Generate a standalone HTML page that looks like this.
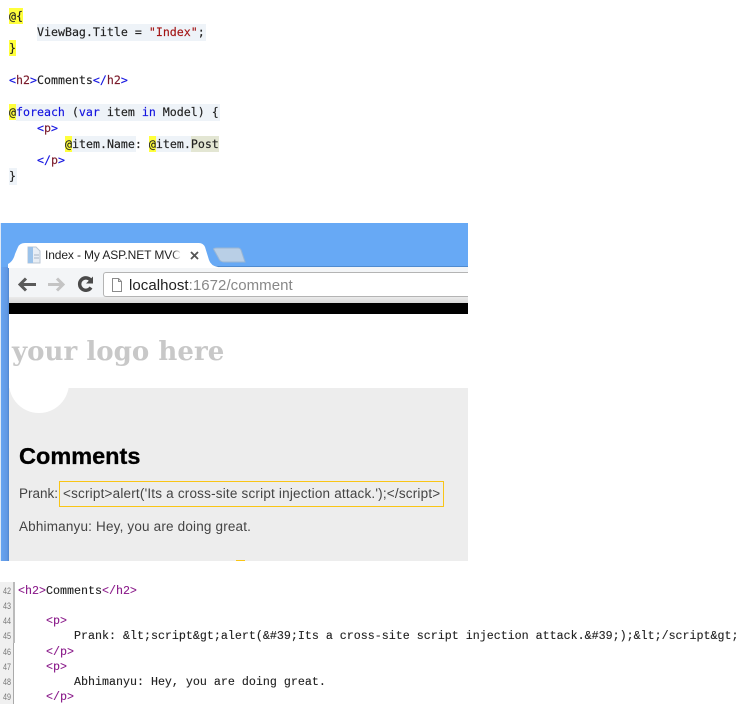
<!DOCTYPE html>
<html><head><meta charset="utf-8">
<style>
html,body{margin:0;padding:0;background:#fff;width:743px;height:709px;overflow:hidden}
.a{position:absolute;white-space:pre}
.c,.b{font-family:"Liberation Mono",monospace;font-size:11.67px;line-height:16px;color:#1a1a1a}
.c{font-family:"DejaVu Sans Mono",monospace;font-size:11.62px;height:16px;color:#222;-webkit-text-stroke:.15px}
.bg{position:absolute}
.bl{color:#1414e0}.br{color:#7a1a2a}.re{color:#a31515}.g{color:#333}
.y{background:#ffff3c;display:inline-block;height:16px}
.b{color:#222;line-height:15px;font-weight:normal;-webkit-text-stroke:.12px}
.m{color:#8a1a8a}
.n{font-family:"Liberation Sans",sans-serif;font-size:9px;color:#777;transform:scaleX(.8);transform-origin:0 0;line-height:12px}
.s{font-family:"Liberation Sans",sans-serif}
</style></head><body>
<!-- code background -->
<div class="bg" style="left:37px;top:24px;width:169px;height:17px;background:#eef3f8"></div>
<div class="bg" style="left:16px;top:104px;width:204px;height:17px;background:#eef3f8"></div>
<div class="bg" style="left:72px;top:136px;width:64px;height:16px;background:#eef3f8"></div>
<div class="bg" style="left:156px;top:136px;width:35px;height:16px;background:#eef3f8"></div>
<div class="bg" style="left:191px;top:136px;width:28px;height:16px;background:#e3e6d3"></div>
<div class="bg" style="left:9px;top:168px;width:8px;height:17px;background:#eef3f8"></div>
<div class="a c" style="left:9px;top:8px"><span class="y">@{</span></div>
<div class="a c" style="left:37px;top:24px">ViewBag.Title = <span class="re">"Index"</span>;</div>
<div class="a c" style="left:9px;top:40px"><span class="y">}</span></div>
<div class="a c" style="left:9px;top:72px"><span class="bl">&lt;</span><span class="br">h2</span><span class="bl">&gt;</span>Comments<span class="bl">&lt;/</span><span class="br">h2</span><span class="bl">&gt;</span></div>
<div class="a c" style="left:9px;top:104px"><span class="y">@</span><span class="bl">foreach</span> (<span class="bl">var</span> item <span class="bl">in</span> Model) {</div>
<div class="a c" style="left:37px;top:120px"><span class="bl">&lt;</span><span class="br">p</span><span class="bl">&gt;</span></div>
<div class="a c" style="left:65px;top:136px"><span class="y">@</span>item.Name: <span class="y">@</span>item.Post</div>
<div class="a c" style="left:37px;top:152px"><span class="bl">&lt;/</span><span class="br">p</span><span class="bl">&gt;</span></div>
<div class="a c" style="left:9px;top:168px">}</div>

<!-- browser -->
<div class="bg" style="left:0;top:223px;width:468px;height:338px;background:#ededed"></div>
<div class="bg" style="left:1px;top:223px;width:467px;height:44px;background:#67a9f5"></div>
<div class="bg" style="left:0;top:223px;width:1px;height:338px;background:#dfe9f6"></div>
<div class="bg" style="left:1px;top:267px;width:8px;height:294px;background:linear-gradient(90deg,#67a4f0 0,#6198e4 6px,#4f86cf 8px)"></div>
<div class="bg" style="left:9px;top:266px;width:459px;height:1px;background:#4f8bd0"></div>
<div class="bg" style="left:9px;top:267px;width:459px;height:36px;background:#f3f5f7"></div>
<svg class="bg" style="left:0;top:223px" width="260" height="46">
<path d="M8 45 L8 41 C12 39 14 35 15 31 L18 24 Q20 20 25 20 L199 20 Q203 20 205 24 L209 37 Q211 43 218 44 L218 45 Z" fill="#fff"/>
<path d="M213.500 26 Q214 25 217 25 L238 25 Q240 25 241 27 L245 39 L224 39 Q220 39 218.500 35 Z" fill="#b9cfe6" stroke="#9ab6d4" stroke-width="1"/>
</svg>
<!-- favicon -->
<svg class="bg" style="left:25px;top:246px" width="17" height="18">
<path d="M3 1 H11 L15 5 V17 H3 Z" fill="#e8eef5" stroke="#b9c6d4"/>
<rect x="3" y="1" width="5" height="16" fill="#9cc3ea"/>
<path d="M9 9H14M9 12H14" stroke="#a9b7c6"/>
</svg>
<div class="a s" style="left:45px;top:247px;font-size:12px;line-height:16px;color:#222;letter-spacing:-.12px">Index - My ASP.NET MVC</div>
<div class="bg" style="left:172px;top:246px;width:9px;height:18px;background:linear-gradient(90deg,rgba(255,255,255,0),#fff)"></div>
<svg class="bg" style="left:190px;top:251px" width="9" height="9"><path d="M1 1 L8 8 M8 1 L1 8" stroke="#555" stroke-width="1.800"/></svg>
<!-- nav icons -->
<svg class="bg" style="left:15px;top:275px" width="85" height="20">
<path d="M5 9.500 H21 M11 3.500 L5 9.500 L11 15.500" fill="none" stroke="#5a5a5a" stroke-width="3"/>
<path d="M33 9.500 H48 M42 3.500 L48 9.500 L42 15.500" fill="none" stroke="#c4c4c4" stroke-width="3"/>
<path d="M75.500 5 A6.200 6.200 0 1 0 76 12.500" fill="none" stroke="#4a4a4a" stroke-width="3.400"/>
<path d="M71 8.500 L78 8.500 L78 1.500 Z" fill="#4a4a4a"/>
</svg>
<!-- omnibox -->
<div class="bg" style="left:103px;top:272px;width:365px;height:25px;background:#fff;border:1px solid #b4b4b4;border-radius:3px 0 0 3px;box-sizing:border-box;border-right:none"></div>
<svg class="bg" style="left:110px;top:277px" width="14" height="16"><path d="M2.500 1.500 H8.500 L11.500 4.500 V14.500 H2.500 Z M8.500 1.500 V4.500 H11.500" fill="#fff" stroke="#8a8a8a"/></svg>
<div class="a s" style="left:129px;top:277px;font-size:15px;line-height:18px;color:#888;letter-spacing:.05px"><span style="color:#222">localhost</span>:1672/comment</div>
<div class="bg" style="left:9px;top:297px;width:459px;height:6px;background:linear-gradient(#eaeaea,#d8d8d8)"></div>
<div class="bg" style="left:9px;top:303px;width:459px;height:11px;background:#000"></div>
<div class="bg" style="left:9px;top:314px;width:459px;height:74px;background:#fff"></div>
<div class="bg" style="left:9px;top:383px;width:60px;height:30px;background:#fff;border-radius:0 0 30px 30px"></div>
<div class="a" style="left:12px;top:334px;font-family:'DejaVu Serif',serif;font-weight:bold;font-size:26px;line-height:36px;color:#c8c8c8;letter-spacing:.05px">your logo here</div>
<div class="a s" style="left:19px;top:441px;font-size:23.500px;line-height:30px;font-weight:bold;color:#000;-webkit-text-stroke:.3px #000">Comments</div>
<div class="a s" style="left:19px;top:485px;font-size:13.500px;line-height:17px;color:#444">Prank:</div>
<div class="bg" style="left:59px;top:481px;width:385px;height:26px;border:1px solid #f9c516;box-sizing:border-box"></div>
<div class="a s" style="left:63px;top:485px;font-size:13.500px;line-height:17px;color:#444;letter-spacing:.2px">&lt;script&gt;alert('Its a cross-site script injection attack.');&lt;/script&gt;</div>
<div class="a s" style="left:19px;top:518px;font-size:13.500px;line-height:17px;color:#444;letter-spacing:.18px">Abhimanyu: Hey, you are doing great.</div>
<div class="bg" style="left:236px;top:560px;width:9px;height:1px;background:#f9c516"></div>

<!-- source -->
<div class="bg" style="left:0;top:582px;width:13px;height:122px;background:#f0f0f0"></div>
<div class="bg" style="left:13px;top:582px;width:2px;height:61px;background:#bbb"></div>
<div class="bg" style="left:13px;top:643px;width:1px;height:61px;background:#aaa"></div>
<div class="a n" style="left:3px;top:585px">42</div>
<div class="a n" style="left:3px;top:600px">43</div>
<div class="a n" style="left:3px;top:615px">44</div>
<div class="a n" style="left:3px;top:630px">45</div>
<div class="a n" style="left:3px;top:646px">46</div>
<div class="a n" style="left:3px;top:661px">47</div>
<div class="a n" style="left:3px;top:676px">48</div>
<div class="a n" style="left:3px;top:691px">49</div>
<div class="a b" style="left:18px;top:584px"><span class="m">&lt;h2&gt;</span>Comments<span class="m">&lt;/h2&gt;</span></div>
<div class="a b" style="left:46px;top:614px"><span class="m">&lt;p&gt;</span></div>
<div class="a b" style="left:74px;top:629px">Prank: &amp;lt;script&amp;gt;alert(&amp;#39;Its a cross-site script injection attack.&amp;#39;);&amp;lt;/script&amp;gt;</div>
<div class="a b" style="left:46px;top:645px"><span class="m">&lt;/p&gt;</span></div>
<div class="a b" style="left:46px;top:660px"><span class="m">&lt;p&gt;</span></div>
<div class="a b" style="left:74px;top:675px">Abhimanyu: Hey, you are doing great.</div>
<div class="a b" style="left:46px;top:690px"><span class="m">&lt;/p&gt;</span></div>
</body></html>
